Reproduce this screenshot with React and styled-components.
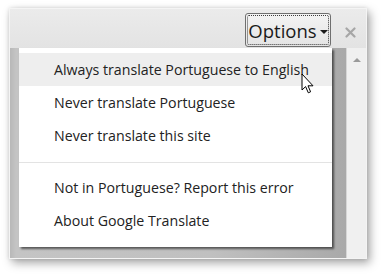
import styled, {createGlobalStyle} from "styled-components";

const GlobalStyle = createGlobalStyle`
    html, body {
        margin: 0;
        padding: 0;
        background: #ffffff;
    }
    body {
        font-family: "Open Sans", "Noto Sans", sans-serif;
        width: 383px;
        height: 276px;
        overflow: hidden;
    }
`;

const Stage = styled.div`
    padding: 8px 16px 17px 9px;
`;

const Window = styled.div`
    width: 356px;
    height: 249px;
    border: 1px solid #f4f4f4;
    background: #e6e6e6;
    box-shadow: 3px 4px 9px rgba(0, 0, 0, 0.35), 0 0 4px rgba(0, 0, 0, 0.12);
    display: flex;
    flex-direction: column;
`;

const Toolbar = styled.div`
    height: 39px;
    flex-shrink: 0;
    display: flex;
    align-items: flex-start;
    justify-content: flex-end;
    padding: 4px 10px 0 0;
    box-sizing: border-box;
    background: linear-gradient(#ebebeb, #e3e3e3);
`;

const OptionsButton = styled.div`
    width: 86px;
    height: 34px;
    box-sizing: border-box;
    border: 1px solid #6f6f6f;
    border-radius: 3px;
    background: linear-gradient(#f4f4f4, #e4e4e4);
    display: flex;
    align-items: center;
    justify-content: center;
    gap: 3px;
    font-size: 18.5px;
    color: #1a1a1a;
    position: relative;
    &::after {
        content: "";
        position: absolute;
        inset: 1px;
        border: 1px dotted #3c3c3c;
        border-radius: 2px;
    }
`;

const Caret = styled.span`
    width: 0;
    height: 0;
    border-left: 4px solid transparent;
    border-right: 4px solid transparent;
    border-top: 4px solid #1a1a1a;
    margin-top: 3px;
`;

const CloseButton = styled.svg`
    margin: 14px 0 0 14px;
    flex-shrink: 0;
`;

const Content = styled.div`
    flex: 1;
    display: flex;
    min-height: 0;
`;

const Page = styled.div`
    flex: 1;
    padding: 0 14px 0 9px;
    background: linear-gradient(90deg, #b8b8b8 0, #c4c4c4 6px, #c0c0c0 60%, #a9a9a9 100%);
`;

const Scrollbar = styled.div`
    width: 20px;
    flex-shrink: 0;
    box-sizing: border-box;
    border-left: 1px solid #d6d6d6;
    background: #f0f0f0;
    display: flex;
    justify-content: center;
    padding-top: 10px;
`;

const ArrowUp = styled.span`
    width: 0;
    height: 0;
    border-left: 4px solid transparent;
    border-right: 4px solid transparent;
    border-bottom: 4px solid #9a9a9a;
`;

const Menu = styled.div`
    position: relative;
    background: #ffffff;
    padding: 5px 0 10px;
    box-shadow: 2px 2px 2px rgba(0, 0, 0, 0.55);
`;

const Item = styled.div`
    height: 33px;
    display: flex;
    align-items: center;
    padding-left: 35px;
    font-size: 14.2px;
    color: #222222;
    background: ${p => (p.$active ? "#eeeeee" : "transparent")};
`;

const Separator = styled.div`
    height: 1px;
    margin: 10px 0 8px;
    background: #e3e3e3;
`;

const Cursor = styled.svg`
    position: absolute;
    left: 282px;
    top: 25px;
`;

export default function App() {
    return (
        <Stage>
            <GlobalStyle />
            <Window>
                <Toolbar>
                    <OptionsButton>
                        Options
                        <Caret />
                    </OptionsButton>
                    <CloseButton width="11" height="11" viewBox="0 0 11 11">
                        <path
                            d="M1.5 1.5 L9.5 9.5 M9.5 1.5 L1.5 9.5"
                            stroke="#a6a6a6"
                            strokeWidth="2.2"
                            strokeLinecap="round"
                        />
                    </CloseButton>
                </Toolbar>
                <Content>
                    <Page>
                        <Menu>
                            <Item $active>Always translate Portuguese to English</Item>
                            <Item>Never translate Portuguese</Item>
                            <Item>Never translate this site</Item>
                            <Separator />
                            <Item>Not in Portuguese? Report this error</Item>
                            <Item>About Google Translate</Item>
                            <Cursor width="14" height="22" viewBox="0 0 14 22">
                                <path
                                    d="M1 1 L1 17 L4.6 13.6 L7.3 19.8 L9.6 18.8 L7 12.8 L12 12.8 Z"
                                    fill="#ffffff"
                                    stroke="#000000"
                                    strokeWidth="1"
                                    strokeLinejoin="miter"
                                />
                            </Cursor>
                        </Menu>
                    </Page>
                    <Scrollbar>
                        <ArrowUp />
                    </Scrollbar>
                </Content>
            </Window>
        </Stage>
    );
}
